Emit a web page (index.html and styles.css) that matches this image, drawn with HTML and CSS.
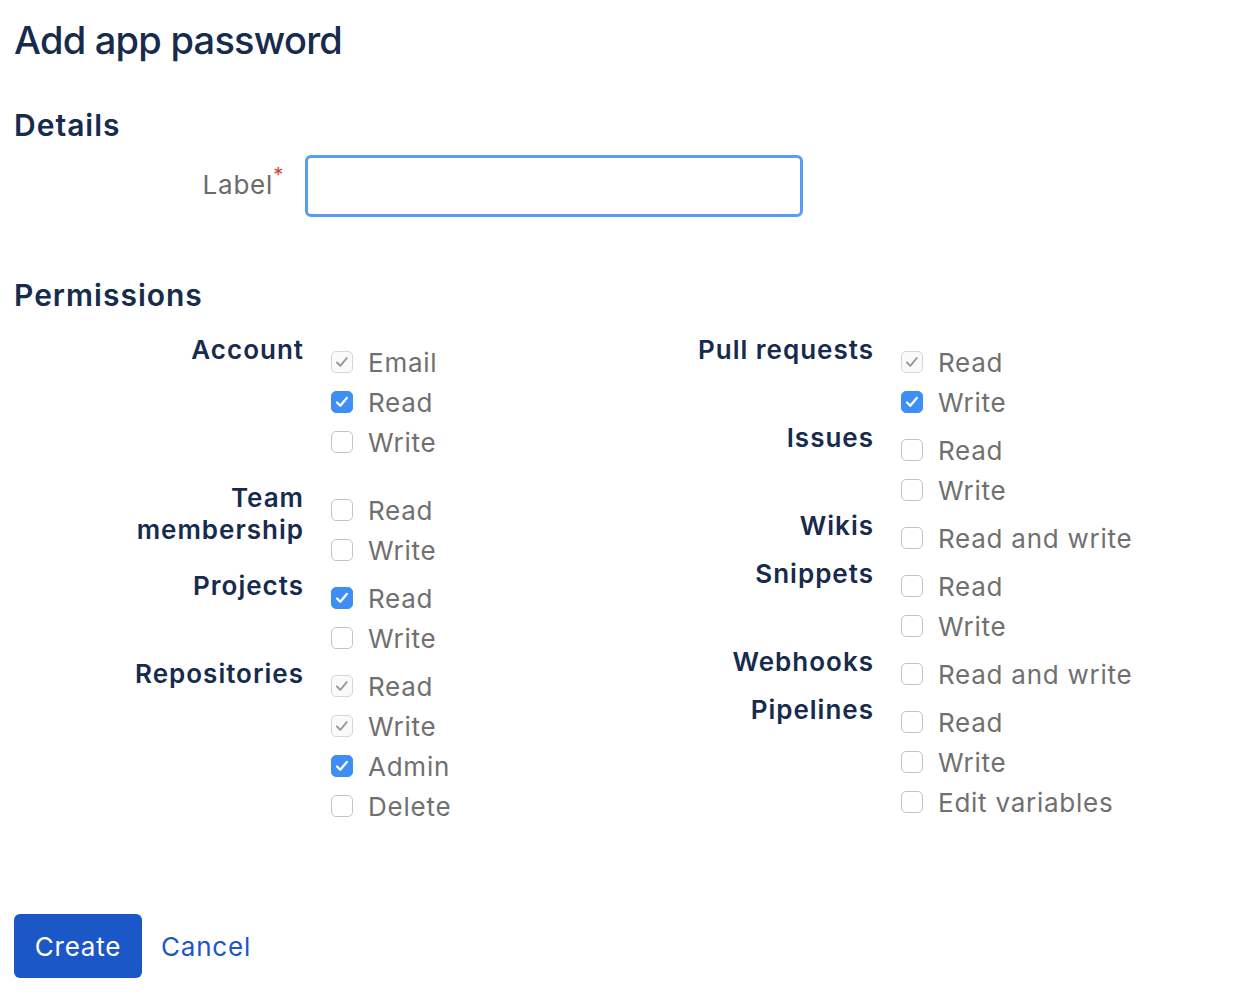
FILE: index.html
```html
<!DOCTYPE html>
<html lang="en">
<head>
<meta charset="utf-8">
<title>Add app password</title>
<link rel="stylesheet" href="styles.css">
</head>
<body>
<main class="page">
  <h1 class="title">Add app password</h1>

  <h2 class="section">Details</h2>
  <div class="field">
    <label class="field-label" for="label">Label<span class="req">*</span></label>
    <input class="text-input" id="label" type="text">
  </div>

  <h2 class="section section-perms">Permissions</h2>
  <div class="perm-grid">
    <div class="perm-col">
      <div class="group group-spaced">
        <div class="group-label">Account</div>
        <ul class="opts">
          <li class="opt"><span class="cb cb-locked"><svg viewBox="0 0 22 22"><path d="M6 11.5 L9.3 14.8 L15.8 7"/></svg></span>Email</li>
          <li class="opt"><span class="cb cb-on"><svg viewBox="0 0 22 22"><path d="M6 11.5 L9.3 14.8 L15.8 7"/></svg></span>Read</li>
          <li class="opt"><span class="cb"></span>Write</li>
        </ul>
      </div>
      <div class="group">
        <div class="group-label">Team membership</div>
        <ul class="opts">
          <li class="opt"><span class="cb"></span>Read</li>
          <li class="opt"><span class="cb"></span>Write</li>
        </ul>
      </div>
      <div class="group">
        <div class="group-label">Projects</div>
        <ul class="opts">
          <li class="opt"><span class="cb cb-on"><svg viewBox="0 0 22 22"><path d="M6 11.5 L9.3 14.8 L15.8 7"/></svg></span>Read</li>
          <li class="opt"><span class="cb"></span>Write</li>
        </ul>
      </div>
      <div class="group">
        <div class="group-label">Repositories</div>
        <ul class="opts">
          <li class="opt"><span class="cb cb-locked"><svg viewBox="0 0 22 22"><path d="M6 11.5 L9.3 14.8 L15.8 7"/></svg></span>Read</li>
          <li class="opt"><span class="cb cb-locked"><svg viewBox="0 0 22 22"><path d="M6 11.5 L9.3 14.8 L15.8 7"/></svg></span>Write</li>
          <li class="opt"><span class="cb cb-on"><svg viewBox="0 0 22 22"><path d="M6 11.5 L9.3 14.8 L15.8 7"/></svg></span>Admin</li>
          <li class="opt"><span class="cb"></span>Delete</li>
        </ul>
      </div>
    </div>

    <div class="perm-col">
      <div class="group">
        <div class="group-label">Pull requests</div>
        <ul class="opts">
          <li class="opt"><span class="cb cb-locked"><svg viewBox="0 0 22 22"><path d="M6 11.5 L9.3 14.8 L15.8 7"/></svg></span>Read</li>
          <li class="opt"><span class="cb cb-on"><svg viewBox="0 0 22 22"><path d="M6 11.5 L9.3 14.8 L15.8 7"/></svg></span>Write</li>
        </ul>
      </div>
      <div class="group">
        <div class="group-label">Issues</div>
        <ul class="opts">
          <li class="opt"><span class="cb"></span>Read</li>
          <li class="opt"><span class="cb"></span>Write</li>
        </ul>
      </div>
      <div class="group">
        <div class="group-label">Wikis</div>
        <ul class="opts">
          <li class="opt"><span class="cb"></span>Read and write</li>
        </ul>
      </div>
      <div class="group">
        <div class="group-label">Snippets</div>
        <ul class="opts">
          <li class="opt"><span class="cb"></span>Read</li>
          <li class="opt"><span class="cb"></span>Write</li>
        </ul>
      </div>
      <div class="group">
        <div class="group-label">Webhooks</div>
        <ul class="opts">
          <li class="opt"><span class="cb"></span>Read and write</li>
        </ul>
      </div>
      <div class="group">
        <div class="group-label">Pipelines</div>
        <ul class="opts">
          <li class="opt"><span class="cb"></span>Read</li>
          <li class="opt"><span class="cb"></span>Write</li>
          <li class="opt"><span class="cb"></span>Edit variables</li>
        </ul>
      </div>
    </div>
  </div>

  <div class="actions">
    <button class="btn-primary" type="button">Create</button>
    <a class="link" href="#">Cancel</a>
  </div>
</main>
</body>
</html>
```

FILE: styles.css
```css
* { box-sizing: border-box; }

html, body {
  margin: 0;
  padding: 0;
  background: #ffffff;
}

body {
  font-family: Inter, "Noto Sans", "Liberation Sans", sans-serif;
  color: #172b4d;
}

.page {
  padding: 17px 0 0 14px;
  width: 1240px;
}

.title {
  margin: 0;
  font-size: 38px;
  line-height: 46px;
  font-weight: 500;
  letter-spacing: -0.75px;
  color: #172b4d;
}

.section {
  margin: 44px 0 0 0;
  font-size: 30px;
  line-height: 36px;
  font-weight: 600;
  letter-spacing: 1px;
  color: #172b4d;
}

.section-perms {
  margin-top: 60px;
}

.field {
  margin-top: 12px;
  display: flex;
  align-items: center;
}

.field-label {
  width: 289px;
  padding-right: 19px;
  padding-bottom: 4px;
  text-align: right;
  font-size: 26px;
  letter-spacing: 0.8px;
  color: #6b6b6b;
}

.req {
  color: #d04437;
  font-size: 20px;
  position: relative;
  top: -12px;
  margin-left: 0;
}

.text-input {
  margin-left: 2px;
  width: 498px;
  height: 62px;
  border: 3px solid #5a9cf2;
  border-radius: 6px;
  outline: none;
  background: #fff;
  font: inherit;
  font-size: 26px;
  padding: 0 12px;
}

.perm-grid {
  margin-top: 21px;
  display: grid;
  grid-template-columns: 570px 570px;
  align-items: start;
}

.group {
  display: grid;
  grid-template-columns: 290px 1fr;
  column-gap: 27px;
  align-items: start;
}

.group-spaced {
  margin-bottom: 20px;
}

.group-label {
  justify-self: end;
  max-width: 182px;
  text-align: right;
  font-size: 26px;
  line-height: 32px;
  font-weight: 600;
  letter-spacing: 1px;
  color: #172b4d;
}

.opts {
  list-style: none;
  margin: 0;
  padding: 8px 0 0 0;
}

.opt {
  display: flex;
  align-items: center;
  height: 40px;
  font-size: 26px;
  letter-spacing: 0.75px;
  color: #707070;
}

.cb {
  flex: none;
  width: 22px;
  height: 22px;
  margin-right: 15px;
  border: 1.5px solid #c4c4c4;
  border-radius: 5px;
  background: #fff;
  display: inline-flex;
  align-items: center;
  justify-content: center;
  overflow: hidden;
}

.cb svg {
  flex: none;
  width: 22px;
  height: 22px;
  fill: none;
  stroke-width: 2.3;
  stroke-linecap: round;
  stroke-linejoin: round;
}

.cb-on {
  background: #3f8ef5;
  border-color: #3f8ef5;
}

.cb-on svg {
  stroke: #ffffff;
}

.cb-locked {
  background: #fafafa;
  border-color: #d6d6d6;
}

.cb-locked svg {
  stroke: #979797;
  stroke-width: 1.9;
}

.actions {
  margin-top: 88px;
  display: flex;
  align-items: center;
}

.btn-primary {
  height: 64px;
  width: 128px;
  background: #1b57c6;
  color: #ffffff;
  border: none;
  border-radius: 6px;
  font-family: inherit;
  font-size: 26px;
  letter-spacing: 0.8px;
  cursor: pointer;
}

.link {
  margin-left: 19px;
  font-size: 26px;
  color: #1b57c6;
  text-decoration: none;
  letter-spacing: 0.8px;
}
```
